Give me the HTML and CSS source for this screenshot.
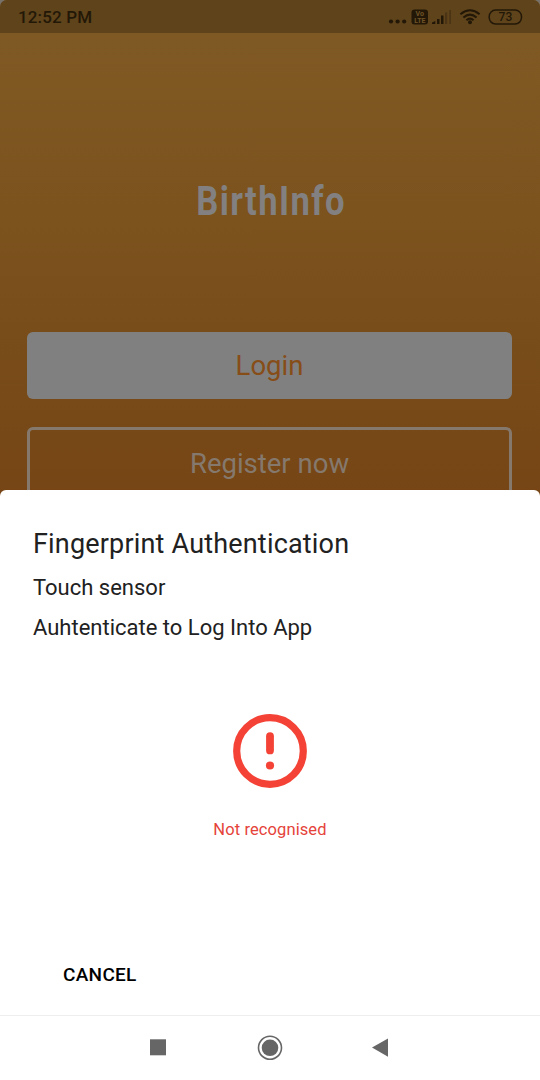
FILE: index.html
```html
<!DOCTYPE html>
<html lang="en">
<head>
<meta charset="utf-8">
<title>BirthInfo</title>
<link rel="stylesheet" href="styles.css">
</head>
<body>
<main class="phone">
  <section class="backdrop">
    <header class="status">
      <span class="clock">12:52 PM</span>
      <svg class="indicators" width="136" height="20" viewBox="0 0 136 20">
        <g fill="#231807">
          <circle cx="4" cy="14.5" r="2.1"/><circle cx="10.6" cy="14.5" r="2.1"/><circle cx="17.2" cy="14.5" r="2.1"/>
          <rect x="24.5" y="2.5" width="16.5" height="15" rx="3"/>
          <path d="M45 17V15.5L48.3 14V17Z"/><rect x="50" y="12" width="2.5" height="5"/><rect x="54" y="8.5" width="2.5" height="8.5"/>
          <g fill="#4a3415"><rect x="58" y="5.5" width="2.2" height="11.5"/><rect x="62.3" y="3" width="1.6" height="14"/></g>
          <circle cx="83" cy="15.3" r="2"/>
        </g>
        <g fill="none" stroke="#231807" stroke-width="2">
          <path d="M73.4 7.2Q83 -0.6 92.6 7.2"/><path d="M76.4 10.4Q83 4.8 89.6 10.4"/><path d="M79.4 13.2Q83 10 86.6 13.2"/>
          <rect x="102.2" y="3.1" width="32.3" height="13.9" rx="6.4" stroke-width="1.5"/>
        </g>
        <text class="volte" x="32.8" y="9.3">Vo</text><text class="volte" x="32.8" y="16">LTE</text>
        <text class="battery" x="118.4" y="14.4">73</text>
      </svg>
    </header>
    <h1 class="brand"><span class="brand-name">BirthInfo</span></h1>
    <div class="actions">
      <div class="button button-solid">Login</div>
      <div class="button button-outline">Register now</div>
    </div>
  </section>
  <section class="sheet">
    <h2 class="sheet-title">Fingerprint Authentication</h2>
    <p class="sheet-subtitle">Touch sensor</p>
    <p class="sheet-description">Auhtenticate to Log Into App</p>
    <div class="result">
      <svg width="74" height="74" viewBox="0 0 74 74">
        <circle cx="37" cy="37" r="33.3" fill="none" stroke="#f44336" stroke-width="7.2"/>
        <rect x="33.1" y="18.3" width="7.8" height="22" rx="3.9" fill="#f44336"/>
        <circle cx="37" cy="51.5" r="4.1" fill="#f44336"/>
      </svg>
      <p class="message">Not recognised</p>
    </div>
    <div class="cancel">CANCEL</div>
  </section>
  <nav class="navbar">
    <svg width="540" height="64" viewBox="0 0 540 64">
      <rect x="150" y="23.3" width="16" height="16" fill="#666"/>
      <circle cx="270" cy="31.8" r="11.5" fill="none" stroke="#666" stroke-width="1.6"/>
      <circle cx="270" cy="31.8" r="8.3" fill="#666"/>
      <path d="M372 31.6L388 22.5V40.8Z" fill="#666"/>
    </svg>
  </nav>
</main>
</body>
</html>
```
FILE: styles.css
```css
* { box-sizing: border-box; }
body { margin: 0; font-family: Roboto, sans-serif; }
h1, h2, p { margin: 0; font-weight: 400; }
svg { display: block; }

.phone {
  width: 540px;
  height: 1080px;
  display: flex;
  flex-direction: column;
  overflow: hidden;
  background: linear-gradient(#77716c 50px, #fff 50px);
}

.backdrop {
  height: 498px;
  flex: none;
  border-radius: 7px 7px 0 0;
  overflow: hidden;
  background: linear-gradient(#7f5923 33px, #7c521d 220px, #774a18 400px, #774515 498px);
}

.status {
  height: 33px;
  padding: 0 17px 0 18px;
  display: flex;
  justify-content: space-between;
  align-items: center;
  background: #5e431b;
}
.clock {
  color: #231807;
  font-size: 17px;
  font-weight: 500;
  line-height: 20px;
  letter-spacing: 0.15px;
}
.volte { font: 700 7px Roboto, sans-serif; fill: #705326; text-anchor: middle; }
.battery { font: 500 12px Roboto, sans-serif; fill: #231807; text-anchor: middle; }

.brand {
  height: 299px;
  padding-top: 140px;
  display: flex;
  justify-content: center;
}
.brand-name {
  height: 56px;
  font: 700 41px/56px Roboto, sans-serif;
  letter-spacing: 1.6px;
  color: #828080;
  transform: translateX(1.5px) scaleX(0.845);
}

.actions {
  margin: 0 28px 0 27px;
  height: 158px;
  overflow: hidden;
}
.button {
  height: 67px;
  border-radius: 6px;
  font-size: 27.5px;
  display: flex;
  justify-content: center;
  align-items: center;
}
.button-solid { background: #808080; color: #874d18; }
.button-outline {
  height: 73px;
  margin-top: 28px;
  border: 3px solid #85796e;
  color: #85796e;
}

.sheet {
  height: 525px;
  margin-top: -8px;
  padding: 36px 33px 0;
  flex: none;
  border-radius: 6px 6px 0 0;
  background: #fff;
  color: #212121;
}
.sheet-title { font-size: 27px; line-height: 36px; letter-spacing: 0.18px; }
.sheet-subtitle { margin-top: 11px; font-size: 22px; line-height: 30px; }
.sheet-description { margin-top: 10px; font-size: 22px; line-height: 30px; }
.result {
  height: 228px;
  padding-top: 71px;
  display: flex;
  flex-direction: column;
  align-items: center;
}
.message { margin-top: 31px; color: #e5433a; font-size: 16.5px; line-height: 22px; letter-spacing: 0.1px; }
.cancel { margin: 89px 0 0 30px; font-size: 19px; font-weight: 500; line-height: 30px; letter-spacing: 0.3px; color: #000; }

.navbar { height: 65px; border-top: 1px solid #eee; flex: none; }
```
